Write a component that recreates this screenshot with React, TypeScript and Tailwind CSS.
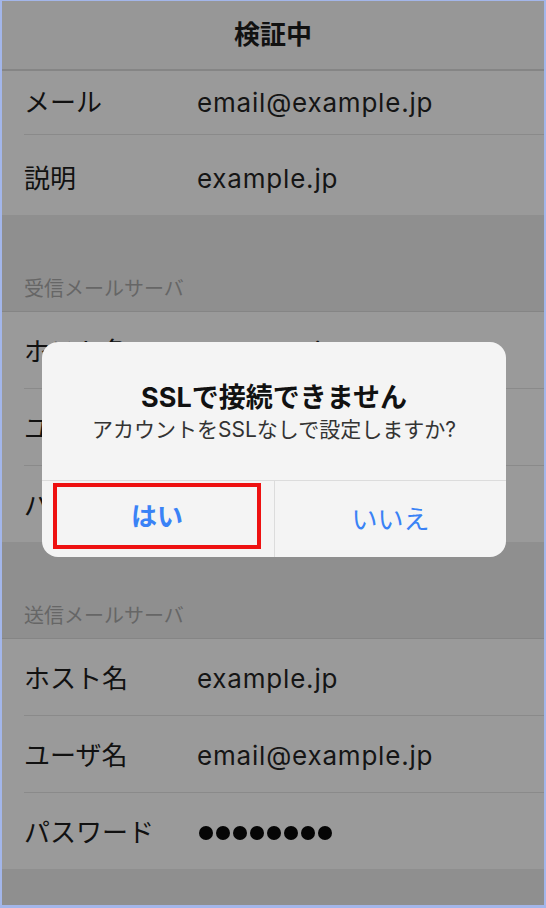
import React from 'react';

const latin = "font-['Inter','Noto_Sans_CJK_JP',sans-serif]";

interface RowProps {
    label: string;
    value?: string;
    dots?: number;
    last?: boolean;
    className?: string;
}

const Row: React.FC<RowProps> = ({ label, value, dots, last, className }) => {
    return (
        <div className={`flex items-stretch pl-[22px] ${className ?? 'h-[77px] pt-[4px]'}`}>
            <div className={`flex flex-1 items-center ${last ? '' : 'border-b border-[#8a8a8a]'}`}>
                <span className="w-[173px] text-[26px] leading-none text-[#111]">{label}</span>
                {dots ? (
                    <span className="flex gap-[3px] pl-[2px]">
                        {Array.from({ length: dots }).map((_, i) => (
                            <span key={i} className="h-[14px] w-[14px] rounded-full bg-[#050505]" />
                        ))}
                    </span>
                ) : (
                    <span className="text-[26px] leading-none tracking-[0.8px] text-[#151515]">{value}</span>
                )}
            </div>
        </div>
    );
};

const SectionHeader: React.FC<{ title: string }> = ({ title }) => (
    <div className="flex h-[97px] items-end border-b border-[#858585] bg-[#8f8f8f] pb-[10px] pl-[22px]">
        <span className="text-[20px] leading-[24px] text-[#666]">{title}</span>
    </div>
);

const ServerSection: React.FC = () => (
    <div className="bg-[#9a9a9a]">
        <Row label="ホスト名" value="example.jp" />
        <Row label="ユーザ名" value="email@example.jp" />
        <Row label="パスワード" dots={8} last className="h-[76px] pt-[4px]" />
    </div>
);

export default function App() {
    return (
        <div
            className={`relative h-[908px] w-[546px] overflow-hidden border-b-[3px] border-l-2 border-r-2 border-t border-[#a3b6ea] bg-[#8f8f8f] ${latin}`}
        >
            <div className="flex h-[70px] items-center justify-center border-b-2 border-[#858585] bg-[#979797]">
                <span className="text-[26px] font-bold leading-none text-[#111]">検証中</span>
            </div>

            <div className="bg-[#9a9a9a]">
                <Row label="メール" value="email@example.jp" className="h-[68px] pb-[4px]" />
                <Row label="説明" value="example.jp" last className="h-[76px] pt-[4px]" />
            </div>

            <SectionHeader title="受信メールサーバ" />
            <ServerSection />

            <SectionHeader title="送信メールサーバ" />
            <ServerSection />

            {/* alert */}
            <div className="absolute left-[40px] top-[341px] w-[464px] overflow-hidden rounded-[16px] bg-[#f4f4f4]">
                <div className="flex h-[138px] flex-col items-center pt-[41px]">
                    <span className="whitespace-nowrap text-[27px] font-bold leading-[30px] text-[#111]">SSLで接続できません</span>
                    <span className="mt-[4px] whitespace-nowrap text-[21px] leading-[26px] text-[#333]">アカウントをSSLなしで設定しますか?</span>
                </div>
                <div className="flex h-[77px] border-t border-[#dcdcdc]">
                    <div className="flex w-[233px] shrink-0 border-r border-[#dcdcdc] pb-[8px] pl-[11px] pr-[13px] pt-[2px]">
                        <div className="flex flex-1 items-center justify-center border-[4px] border-[#ee1111]">
                            <span className="text-[26px] font-bold text-[#3a82f6]">はい</span>
                        </div>
                    </div>
                    <div className="flex w-[231px] shrink-0 items-center justify-center">
                        <span className="text-[26px] text-[#3a82f6]">いいえ</span>
                    </div>
                </div>
            </div>
        </div>
    );
}
